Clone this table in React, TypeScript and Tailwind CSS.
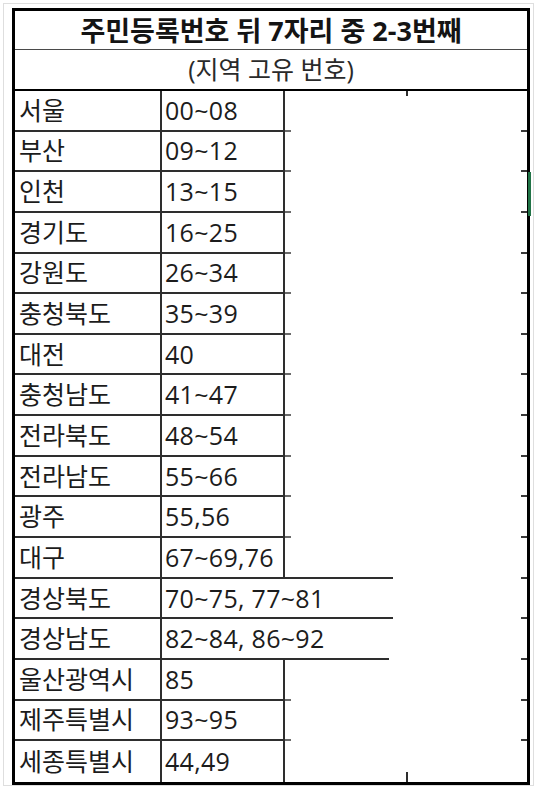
import React from "react";

type Row = { name: string; code: string; span?: boolean; lineExt?: number };

const rows: Row[] = [
  { name: "서울", code: "00~08" },
  { name: "부산", code: "09~12" },
  { name: "인천", code: "13~15" },
  { name: "경기도", code: "16~25" },
  { name: "강원도", code: "26~34" },
  { name: "충청북도", code: "35~39" },
  { name: "대전", code: "40" },
  { name: "충청남도", code: "41~47" },
  { name: "전라북도", code: "48~54" },
  { name: "전라남도", code: "55~66" },
  { name: "광주", code: "55,56" },
  { name: "대구", code: "67~69,76", lineExt: 108 },
  { name: "경상북도", code: "70~75, 77~81", span: true, lineExt: 108 },
  { name: "경상남도", code: "82~84, 86~92", span: true, lineExt: 104 },
  { name: "울산광역시", code: "85" },
  { name: "제주특별시", code: "93~95" },
  { name: "세종특별시", code: "44,49" },
];

const font = { fontFamily: '"Open Sans", "Noto Sans CJK KR", sans-serif' };

export default function App() {
  return (
    <div className="w-[537px] h-[789px] bg-white pt-[3px] pl-[3px]" style={font}>
      <div className="w-[531px] h-[783px] border border-[#dedede] pt-[4px] pl-[8px]">
        <div className="relative w-[518px] h-[777px] border-[3px] border-black flex flex-col">
          {/* title */}
          <div className="h-[39px] shrink-0 border-b border-[#4a4a4a] flex items-center justify-center text-[27px] font-bold text-[#141414] leading-none">
            주민등록번호 뒤 7자리 중 2-3번째
          </div>
          <div className="h-[41px] shrink-0 border-b-2 border-black flex items-center justify-center text-[25px] text-[#2a2a2a] leading-none">
            (지역 고유 번호)
          </div>
          <div className="flex-1 flex flex-col">
            {rows.map((r, i) => {
              const last = i === rows.length - 1;
              const first = i === 0;
              return (
                <div key={r.name} className="flex-1 flex flex-col">
                  <div className="flex-1 flex">
                    <div className="w-[145px] shrink-0 flex items-center pl-[4px] text-[25px] text-[#1c1c1c] leading-none whitespace-nowrap">
                      {r.name}
                    </div>
                    <div className="w-[2px] shrink-0 bg-[#2e2e2e]" />
                    {r.span ? (
                      <div className="w-[230px] shrink-0 flex items-center pl-[3px] text-[25px] text-[#1c1c1c] leading-none whitespace-nowrap tracking-[0.3px]">
                        {r.code}
                      </div>
                    ) : (
                      <>
                        <div className="w-[121px] shrink-0 flex items-center pl-[3px] text-[25px] text-[#1c1c1c] leading-none whitespace-nowrap tracking-[0.3px]">
                          {r.code}
                        </div>
                        <div className="w-[2px] shrink-0 bg-[#2e2e2e]" />
                        <div className="w-[121px] shrink-0" />
                        {first && <div className="w-[2px] h-[5px] shrink-0 bg-[#2e2e2e] self-start" />}
                        {last && <div className="w-[2px] h-[10px] shrink-0 bg-[#2e2e2e] self-end" />}
                      </>
                    )}
                  </div>
                  {!last && (
                    <div className="h-[2px] shrink-0 flex">
                      <div className="w-[270px] shrink-0 bg-[#2e2e2e]" />
                      <div
                        className={
                          r.lineExt === 108
                            ? "w-[108px] shrink-0 bg-[#2e2e2e]"
                            : r.lineExt === 104
                            ? "w-[104px] shrink-0 bg-[#2e2e2e]"
                            : "w-[6px] shrink-0 bg-[#6a6a6a]"
                        }
                      />
                      <div className="flex-1" />
                      <div className="w-[6px] shrink-0 bg-[#3a3a3a]" />
                    </div>
                  )}
                </div>
              );
            })}
          </div>
          {/* selection marker */}
          <div className="absolute right-[-4px] top-[161px] w-[3px] h-[44px] bg-[#217346]" />
        </div>
      </div>
    </div>
  );
}
